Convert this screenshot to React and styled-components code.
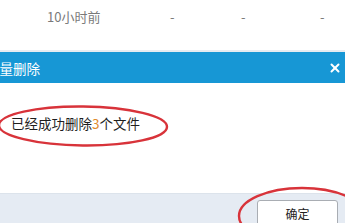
import React from "react";
import styled, { createGlobalStyle } from "styled-components";
import { X } from "lucide-react";

const GlobalStyle = createGlobalStyle`
  html, body {
    margin: 0;
    padding: 0;
    background: #fff;
    overflow: hidden;
  }
  body {
    font-family: "Noto Sans CJK SC", "Noto Sans", sans-serif;
  }
`;

const App = () => {
  return (
    <>
      <GlobalStyle />
      <Page>
        <TableRow>
          <Cell>10小时前</Cell>
          <Cell>-</Cell>
          <Cell>-</Cell>
          <Cell>-</Cell>
        </TableRow>
        <Dialog>
          <TitleBar>
            <Title>批量删除</Title>
            <Close>
              <X size={14} strokeWidth={3.4} color="#fff" />
            </Close>
          </TitleBar>
          <Body>
            <Message>
              已经成功删除<Count>3</Count>个文件
            </Message>
          </Body>
          <Footer>
            <Button>确定</Button>
          </Footer>
        </Dialog>
        <Marks viewBox="0 0 345 223" width="345" height="223">
          <ellipse
            cx="83"
            cy="126"
            rx="84"
            ry="19.5"
            transform="rotate(0.6 83 126)"
            fill="none"
            stroke="#d8333a"
            strokeWidth="2.4"
          />
          <ellipse
            cx="302"
            cy="216"
            rx="63"
            ry="28"
            fill="none"
            stroke="#d8333a"
            strokeWidth="2.4"
          />
        </Marks>
      </Page>
    </>
  );
};

const Page = styled.div`
  position: relative;
  width: 345px;
  height: 223px;
  overflow: hidden;
`;

const TableRow = styled.div`
  display: grid;
  grid-template-columns: 123px 71px 79px 1fr;
  padding: 7px 0 0 47px;
  height: 43px;
  border-bottom: 2px solid #e6ecf1;
`;

const Cell = styled.div`
  font-size: 13px;
  line-height: 20px;
  color: #7a7a7a;
`;

const Dialog = styled.div`
  margin-left: -24px;
  display: flex;
  flex-direction: column;
`;

const TitleBar = styled.div`
  display: flex;
  align-items: center;
  justify-content: space-between;
  height: 31px;
  padding: 0 3px 0 10px;
  background: #1797d5;
`;

const Title = styled.span`
  font-size: 13.5px;
  color: #fff;
`;

const Close = styled.span`
  display: flex;
  align-items: center;
`;

const Body = styled.div`
  height: 110px;
  padding: 30px 0 0 35px;
  box-sizing: border-box;
  background: #fff;
`;

const Message = styled.p`
  margin: 0;
  font-size: 13.5px;
  line-height: 20px;
  color: #1e1e1e;
`;

const Count = styled.span`
  color: #e08a2c;
`;

const Footer = styled.div`
  display: flex;
  justify-content: flex-end;
  padding: 6px 7px 0 0;
  height: 40px;
  background: #e5ebf3;
  border-top: 1px solid #dce3eb;
`;

const Button = styled.button`
  width: 81px;
  height: 26px;
  font-family: inherit;
  font-size: 12px;
  color: #222;
  background: #fff;
  border: 1px solid #a9adb3;
  border-radius: 3px;
  padding: 0;
`;

const Marks = styled.svg`
  position: absolute;
  left: 0;
  top: 0;
  pointer-events: none;
`;

export default App;
